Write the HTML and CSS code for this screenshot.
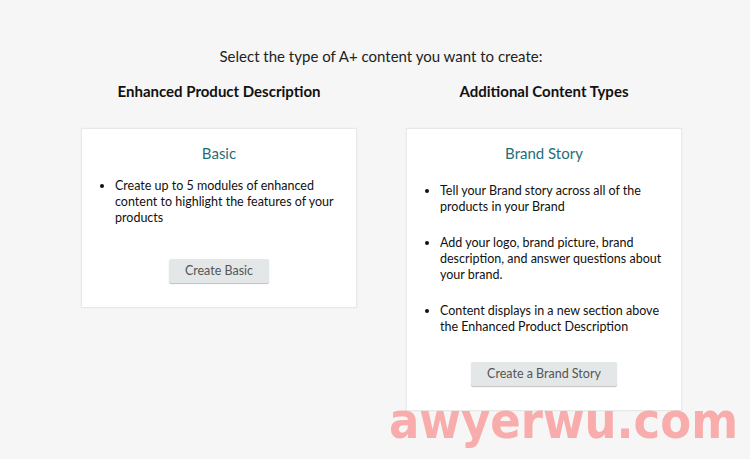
FILE: index.html
```html
<!DOCTYPE html>
<html lang="en">
<head>
    <meta charset="UTF-8">
    <meta name="viewport" content="width=device-width, initial-scale=1.0">
    <title>A+ Content Manager</title>
    <link rel="stylesheet" href="styles.css">
</head>
<body>
  <div class="page">
    <h1 class="page-title">Select the type of A+ content you want to create:</h1>

    <div class="columns">
      <div class="column">
        <h2 class="column-title">Enhanced Product Description</h2>
        <div class="card">
          <h3 class="card-title">Basic</h3>
          <ul class="card-list">
            <li>Create up to 5 modules of enhanced content to highlight the features of your products</li>
          </ul>
          <div class="card-actions card-actions-basic">
            <button class="btn">Create Basic</button>
          </div>
        </div>
      </div>

      <div class="column">
        <h2 class="column-title">Additional Content Types</h2>
        <div class="card">
          <h3 class="card-title">Brand Story</h3>
          <ul class="card-list card-list-spaced">
            <li>Tell your Brand story across all of the products in your Brand</li>
            <li>Add your logo, brand picture, brand description, and answer questions about your brand.</li>
            <li>Content displays in a new section above the Enhanced Product Description</li>
          </ul>
          <div class="card-actions">
            <button class="btn">Create a Brand Story</button>
          </div>
        </div>
      </div>
    </div>
  </div>

  <div class="watermark">awyerwu.com</div>
</body>
</html>
```

FILE: styles.css
```css
body {
    margin: 0;
    background-color: #f6f6f6;
    font-family: Lato, "Noto Sans", sans-serif;
    color: #111;
    height: 459px;
    overflow: hidden;
    position: relative;
}

.page {
    width: 600px;
    margin-left: 81px;
    padding-top: 44px;
}

.page-title {
    margin: 0;
    text-align: center;
    font-size: 15px;
    font-weight: normal;
    line-height: 24px;
    color: #222;
}

.columns {
    display: grid;
    grid-template-columns: 276px 276px;
    column-gap: 49px;
    margin-top: 11px;
}

.column-title {
    margin: 0 0 25px;
    text-align: center;
    font-size: 15px;
    font-weight: bold;
    line-height: 24px;
    color: #111;
}

.card {
    background-color: #fff;
    border: 1px solid #e8e8e8;
    box-shadow: 0 0 2px rgba(0,0,0,0.05);
    padding: 13px 12px 24px 20px;
}

.card-title {
    margin: 0 0 14px;
    text-align: center;
    font-size: 15px;
    font-weight: normal;
    line-height: 22px;
    color: #1f6f78;
    padding-right: 8px;
}

.card-list {
    margin: 0;
    padding-left: 13px;
    font-size: 12.5px;
    line-height: 16px;
}

.card-list-spaced {
    margin-top: 19px;
}

.card-list-spaced li {
    margin-bottom: 20px;
}

.card-list-spaced li:last-child {
    margin-bottom: 0;
}

.card-actions {
    text-align: center;
    margin-top: 27px;
    padding-right: 8px;
}

.card-actions-basic {
    margin-top: 33px;
}

.btn {
    font-family: inherit;
    font-size: 12.5px;
    color: #555;
    background-color: #e3e7e8;
    border: none;
    border-radius: 2px;
    box-shadow: 0 1px 1px rgba(0,0,0,0.25);
    padding: 0 16px;
    height: 24px;
    line-height: 24px;
}

.watermark {
    position: absolute;
    left: 389px;
    top: 391px;
    font-family: "DejaVu Sans Condensed", "DejaVu Sans", sans-serif;
    font-weight: bold;
    font-size: 50px;
    letter-spacing: 0;
    color: #f9acac;
    line-height: 60px;
}
```
